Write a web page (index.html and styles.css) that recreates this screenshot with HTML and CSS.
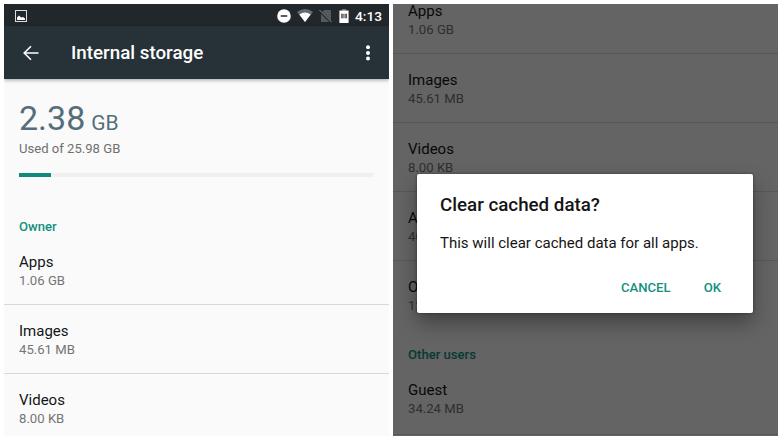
FILE: index.html
```html
<!DOCTYPE html>
<html lang="en">
<head>
<meta charset="utf-8">
<title>Internal storage</title>
<link rel="stylesheet" href="styles.css">
</head>
<body>
<main class="screens">
  <section class="screen">
    <div class="statusbar">
      <svg class="pic" width="12" height="12" viewBox="0 0 12 12"><rect x=".5" y=".5" width="11" height="11" fill="none" stroke="#ddd"/><path d="M2 10V7.5L4 5.5 6 7.5 8 7 10 8.5V10z" fill="#fff"/></svg>
      <svg class="dnd" width="14" height="14" viewBox="0 0 14 14"><circle cx="7" cy="7" r="6.8" fill="#fff"/><path d="M3.7 7h6.6" stroke="#21272b" stroke-width="1.5"/></svg>
      <svg class="wifi" width="16" height="13" viewBox="0 0 16 13"><path d="M0 3Q8-3 16 3L8 13z" fill="#666b6e"/><path d="M2.3 5.5Q8 1.5 13.7 5.5L8 13z" fill="#fff"/></svg>
      <svg class="sim" width="13" height="14" viewBox="0 0 13 14"><path d="M5 1H12V13H2V4z" fill="#565a5d"/><path d="M0 1.2L12.5 13.6" stroke="#21272b" stroke-width="2.4"/><path d="M.5 1L12.5 13" stroke="#8a8d8f"/></svg>
      <svg class="battery" width="10" height="14" viewBox="0 0 10 14"><path d="M3 0h4v1.6H3z" fill="#777"/><path d="M.4 1.5h9.2V14H.4z" fill="#fff"/><path d="M2.2 4.8h2.4v4.4H2.2zM5.5 4.8h2.4v4.4H5.5z" fill="#444"/><path d="M3.1 5.5h.6v1h-.6zM3.1 7.5h.6v1h-.6zM6.4 5.5h.6v1h-.6zM6.4 7.5h.6v1h-.6z" fill="#fff"/></svg>
      <span class="clock">4:13</span>
    </div>
    <header class="toolbar">
      <svg class="back" width="16" height="16" viewBox="0 0 16 16"><path d="M15.5 8H1.5M8 1.2L1.2 8 8 14.8" fill="none" stroke="#fff" stroke-width="1.6"/></svg>
      <h1 class="heading">Internal storage</h1>
      <svg class="more" width="4" height="16" viewBox="0 0 4 16"><circle cx="2" cy="2.3" r="2" fill="#fff"/><circle cx="2" cy="7.9" r="2" fill="#fff"/><circle cx="2" cy="13.5" r="2" fill="#fff"/></svg>
    </header>
    <div class="usage">
      <div class="total"><span class="amount">2.38</span><span class="unit">GB</span></div>
      <div class="used">Used of 25.98 GB</div>
      <div class="track"><div class="fill"></div></div>
    </div>
    <h2 class="category owner">Owner</h2>
    <div class="item"><div class="name">Apps</div><div class="size">1.06 GB</div></div>
    <div class="item"><div class="name">Images</div><div class="size">45.61 MB</div></div>
    <div class="item"><div class="name">Videos</div><div class="size">8.00 KB</div></div>
  </section>

  <section class="screen">
    <div class="scrolled">
      <div class="item"><div class="name">Apps</div><div class="size">1.06 GB</div></div>
      <div class="item"><div class="name">Images</div><div class="size">45.61 MB</div></div>
      <div class="item"><div class="name">Videos</div><div class="size">8.00 KB</div></div>
      <div class="item"><div class="name">A</div><div class="size">40</div></div>
      <div class="item last"><div class="name">O</div><div class="size">12</div></div>
      <h2 class="category">Other users</h2>
      <div class="item guest"><div class="name">Guest</div><div class="size">34.24 MB</div></div>
    </div>
    <div class="scrim"></div>
    <div class="dialog">
      <h2 class="question">Clear cached data?</h2>
      <p class="message">This will clear cached data for all apps.</p>
      <div class="actions"><span>CANCEL</span><span>OK</span></div>
    </div>
  </section>
</main>
</body>
</html>
```

FILE: styles.css
```css
* { box-sizing: border-box; margin: 0; padding: 0; }
body { background: #fff; font-family: Roboto, sans-serif; color: #151515; }
svg { display: block; flex: none; }

.screens { display: flex; gap: 4px; padding: 4px; width: 782px; height: 440px; }
.screen { position: relative; width: 385px; height: 432px; overflow: hidden; background: #fafafa; }

.statusbar { display: flex; align-items: center; height: 22px; padding: 1px 7px 0 11px; background: #21272b; }
.dnd { margin-left: auto; }
.wifi { margin-left: 6px; }
.sim { margin-left: 6px; }
.battery { margin-left: 7px; }
.clock { width: 27px; margin-left: 6px; color: #fff; font-size: 13.7px; font-weight: 500; line-height: 20px; white-space: nowrap; }

.toolbar { display: flex; align-items: center; height: 53px; padding: 0 19px 0 19px; background: #263238; box-shadow: 0 1px 4px rgba(0, 0, 0, .35); }
.heading { margin-left: 32px; padding-top: 1px; color: #fff; font-size: 18.8px; font-weight: 500; line-height: 24px; }
.more { margin-left: auto; }

.usage { height: 110px; padding: 18px 15px 0; }
.total { display: flex; align-items: baseline; height: 43px; line-height: 42px; color: #546e7a; }
.amount { font-size: 34px; }
.unit { margin-left: 6px; font-size: 21px; }
.used { height: 18px; font-size: 13.1px; line-height: 18px; color: #707070; }
.track { height: 4px; margin-top: 15px; background: #f0f0f0; }
.fill { width: 32px; height: 4px; background: #128a7b; }

.category { padding: 0 15px; color: #13917e; font-size: 13.1px; font-weight: 500; line-height: 18px; }
.owner { height: 18px; margin: 29px 0 0; }

.item { height: 69px; padding: 16px 15px 0; border-bottom: 1px solid #d9d9d9; }
.owner + .item { margin-top: 0; }
.name { height: 20px; font-size: 15px; line-height: 20px; }
.size { height: 18px; font-size: 13.15px; line-height: 18px; color: #757575; }

.scrolled { margin-top: -19px; }
.last { height: 67px; border-bottom: 0; }
.scrolled .category { height: 36px; padding-top: 18px; }
.guest { height: 71px; }
.scrim { position: absolute; inset: 0; background: rgba(0, 0, 0, .6); }

.dialog { position: absolute; left: 24px; top: 170px; width: 336px; height: 139px; padding: 18px 23px 0; border-radius: 2px; background: #fff; box-shadow: 0 10px 20px rgba(0, 0, 0, .35), 0 0 3px rgba(0, 0, 0, .4); }
.question { padding-top: 1px; font-size: 18.75px; font-weight: 500; line-height: 24px; }
.message { margin-top: 16px; font-size: 15px; line-height: 20px; }
.actions { display: flex; justify-content: flex-end; gap: 33px; margin-top: 26px; padding-right: 9px; color: #13917e; font-size: 13.15px; font-weight: 500; line-height: 18px; }
```
